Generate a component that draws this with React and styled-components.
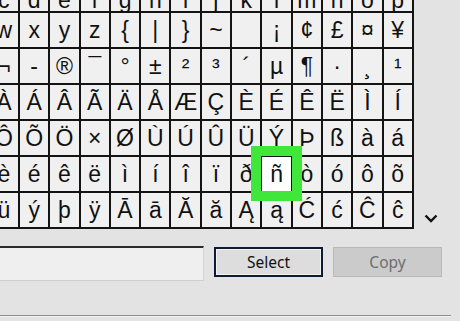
import React from "react";
import styled, { createGlobalStyle } from "styled-components";

const Global = createGlobalStyle`
  html, body { margin: 0; padding: 0; background: #e3e3e3; }
  body { width: 460px; height: 321px; overflow: hidden; }
`;

const rows = [
  ["c", "d", "e", "f", "g", "h", "i", "j", "k", "l", "m", "n", "o", "p"],
  ["w", "x", "y", "z", "{", "|", "}", "~", "\u00a0", "¡", "¢", "£", "¤", "¥"],
  ["¬", "-", "®", "¯", "°", "±", "²", "³", "´", "µ", "¶", "·", "¸", "¹"],
  ["À", "Á", "Â", "Ã", "Ä", "Å", "Æ", "Ç", "È", "É", "Ê", "Ë", "Ì", "Í"],
  ["Ô", "Õ", "Ö", "×", "Ø", "Ù", "Ú", "Û", "Ü", "Ý", "Þ", "ß", "à", "á"],
  ["è", "é", "ê", "ë", "ì", "í", "î", "ï", "ð", "ñ", "ò", "ó", "ô", "õ"],
  ["ü", "ý", "þ", "ÿ", "Ā", "ā", "Ă", "ă", "Ą", "ą", "Ć", "ć", "Ĉ", "ĉ"],
];

const Window = styled.div`
  width: 460px;
  height: 321px;
  background: #e3e3e3;
  display: flex;
  flex-direction: column;
  overflow: hidden;
`;

const TopArea = styled.div`
  display: flex;
  height: 229px;
`;

const GridViewport = styled.div`
  width: 414px;
  height: 229px;
  overflow: hidden;
  flex: none;
`;

const CharGrid = styled.div`
  display: grid;
  grid-template-columns: repeat(14, 28.3px);
  grid-auto-rows: 34px;
  gap: 2px;
  padding: 2px;
  background: #141414;
  width: max-content;
  margin-left: -12.3px;
  margin-top: -25px;
`;

const Cell = styled.div`
  background: ${(p) => (p.$selected ? "#ffffff" : "#f0f0f0")};
  display: flex;
  align-items: center;
  justify-content: center;
  font-family: "Liberation Sans", Arial, sans-serif;
  font-size: 23px;
  line-height: 34px;
  color: #111;
  position: relative;
  padding-top: ${(p) => (p.$drop ? "12px" : "0")};
  box-sizing: border-box;
`;

const Highlight = styled.div`
  position: absolute;
  left: -11px;
  top: -11px;
  right: -11px;
  bottom: -10px;
  border: 10px solid #41e63b;
  pointer-events: none;
  z-index: 2;
`;

const Side = styled.div`
  flex: 1;
  display: flex;
  align-items: flex-end;
  padding-left: 10px;
  padding-bottom: 6px;
`;

const Chevron = styled.svg`
  width: 14px;
  height: 9px;
  display: block;
`;

const ControlRow = styled.div`
  display: flex;
  align-items: flex-start;
  gap: 10px;
  margin-top: 17px;
  margin-left: -20px;
`;

const CopyField = styled.div`
  width: 224px;
  height: 35px;
  background: #efefef;
  border-top: 2px solid #2a2a2a;
  border-bottom: 1px solid #cfcfcf;
  border-right: 1px solid #d6d6d6;
  box-sizing: border-box;
`;

const Button = styled.div`
  width: 109px;
  height: 30px;
  box-sizing: border-box;
  margin-top: 1px;
  display: flex;
  align-items: center;
  justify-content: center;
  font-family: "Noto Sans", "Open Sans", sans-serif;
  font-size: 15.5px;
  background: ${(p) => (p.$disabled ? "#cbcbcb" : "#dddddd")};
  color: ${(p) => (p.$disabled ? "#6e6e6e" : "#111")};
  border: ${(p) => (p.$disabled ? "1px solid #b9b9b9" : "2px solid #0f1a36")};
  box-shadow: ${(p) => (p.$disabled ? "none" : "inset 0 0 0 1px #f2f2f2")};
`;

const BottomRule = styled.div`
  margin-top: auto;
  margin-bottom: 4px;
  width: 451px;
  height: 1px;
  background: #8c8c8c;
  border-bottom: 1px solid #f4f4f4;
`;

export default function App() {
  return (
    <Window>
      <Global />
      <TopArea>
        <GridViewport>
          <CharGrid>
            {rows.map((row, r) =>
              row.map((ch, c) => {
                const sel = r === 5 && c === 9;
                return (
                  <Cell key={`${r}-${c}`} $selected={sel} $drop={r === 0}>
                    {ch}
                    {sel && <Highlight />}
                  </Cell>
                );
              })
            )}
          </CharGrid>
        </GridViewport>
        <Side>
          <Chevron viewBox="0 0 14 9">
            <polyline
              points="1.5,1.5 7,7 12.5,1.5"
              fill="none"
              stroke="#111"
              strokeWidth="2.4"
            />
          </Chevron>
        </Side>
      </TopArea>
      <ControlRow>
        <CopyField />
        <Button>Select</Button>
        <Button $disabled>Copy</Button>
      </ControlRow>
      <BottomRule />
    </Window>
  );
}
